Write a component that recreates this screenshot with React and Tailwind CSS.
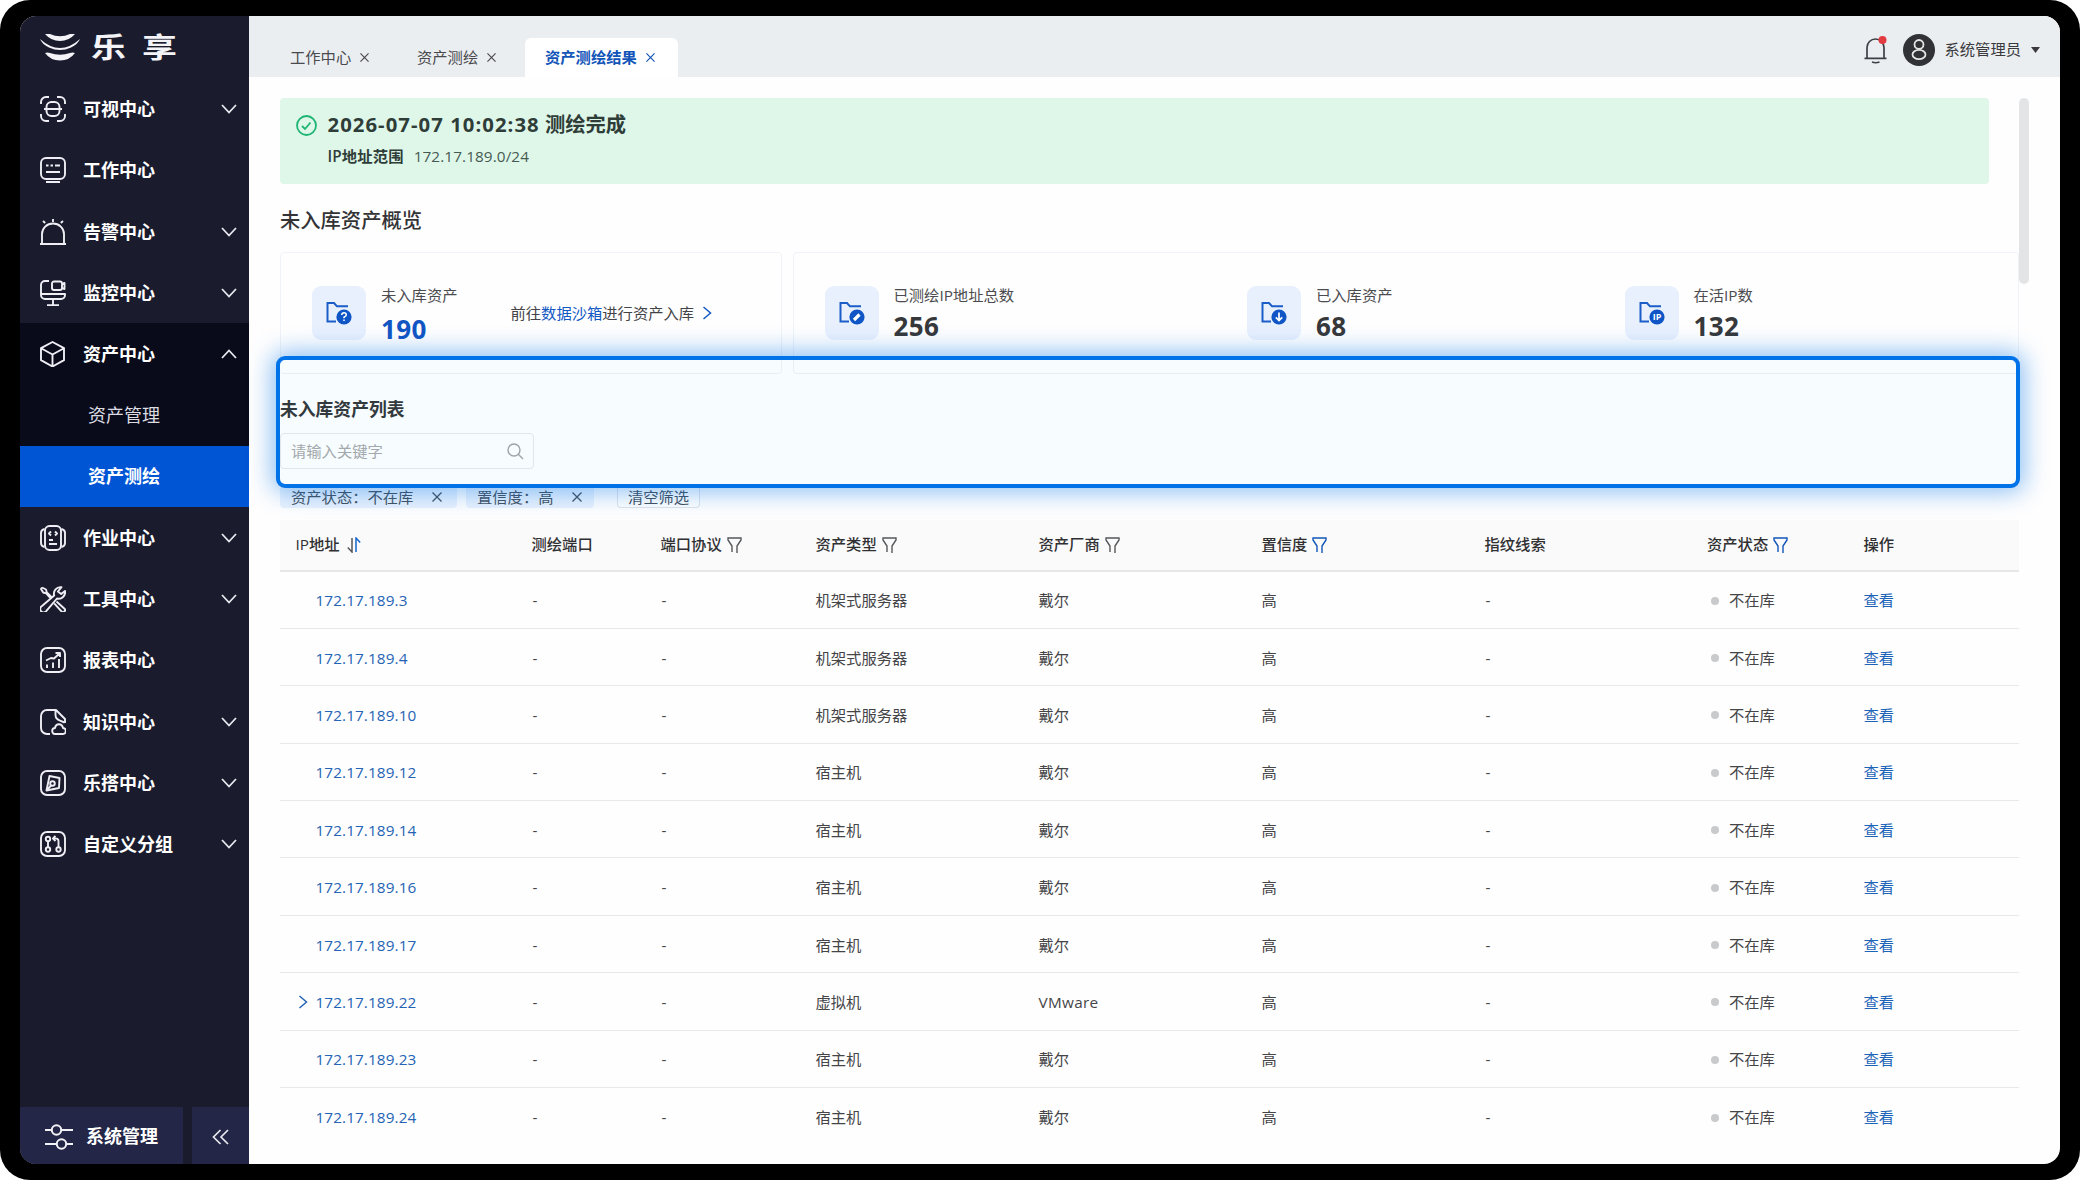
import { useState } from "react"
import clsx from "clsx"

const MENU = [
  { key: "view", label: "可视中心", arrow: true },
  { key: "work", label: "工作中心" },
  { key: "alarm", label: "告警中心", arrow: true },
  { key: "monitor", label: "监控中心", arrow: true },
  { key: "asset", label: "资产中心", arrow: true, children: ["资产管理", "资产测绘"] },
  { key: "job", label: "作业中心", arrow: true },
  { key: "tool", label: "工具中心", arrow: true },
  { key: "report", label: "报表中心" },
  { key: "know", label: "知识中心", arrow: true },
  { key: "build", label: "乐搭中心", arrow: true },
  { key: "group", label: "自定义分组", arrow: true },
]

const MENU_ICONS = {
  view: (
    <>
      <path d="M1 8V6a5 5 0 0 1 5-5h3M17 1h3a5 5 0 0 1 5 5v2M25 18v2a5 5 0 0 1-5 5h-3M9 25H6a5 5 0 0 1-5-5v-2" />
      <rect x="6.500" y="6" width="13" height="14" rx="5" />
      <path d="M4 13h18" />
    </>
  ),
  work: (
    <>
      <rect x="1" y="1" width="24" height="21" rx="5" />
      <path d="M6 8.500h2.500M10.500 8.500h2.500M15 8.500h5M6 15h14M6 25h14" />
    </>
  ),
  alarm: <path d="M2 24.500V15a10.700 10.200 0 0 1 22 0v9.500M0 25h26M13 0V3M3 2l2.200 2M23 2l-2.200 2" />,
  monitor: (
    <>
      <path d="M9 1H5a4 4 0 0 0-4 4v10a4 4 0 0 0 4 4h16a4 4 0 0 0 4-4v-1H1M13 19v6M7 25.200h12" />
      <rect x="12" y="1.500" width="10" height="8.500" rx="2" />
      <path d="M22 4l2.500-1v6L22 8" />
    </>
  ),
  asset: <path d="M12.500 1l11.500 6.200v12L12.500 25.500 1 19.200v-12zM1.500 7.500l11 6 11-6M12.500 13.500v12" />,
  job: (
    <>
      <rect x="5" y="1" width="16" height="24" rx="4.500" />
      <path d="M4.500 4C2 4.500 1 6 1 8v10c0 2 1 3.500 3.500 4M21.500 4C24 4.500 25 6 25 8v10c0 2-1 3.500-3.500 4M11 6.500L9 8.500l2 2M15 6.500l2 2-2 2M9 15h4M9 19h8" />
    </>
  ),
  tool: (
    <>
      <path d="M2 1.500l4 2 .8 3L12 11.500M2 1.500L1 3l2.200 3.500 3 .8L10 11.500M16.500 15.500l8 7.200a2 2 0 0 1-3 2.700l-7.300-8" />
      <path d="M21.500 1.200a6.500 6.500 0 0 0-7.300 8.300L2 20a3.400 3.400 0 1 0 4.600 4.600L17 12.500a6.500 6.500 0 0 0 8-7.500l-3.800 3-3.300-2.500z" />
      <path d="M4.300 22.300h.1" />
    </>
  ),
  report: (
    <>
      <rect x="1" y="1" width="24" height="24" rx="6" />
      <path d="M7 21v-3.500M13 21v-5.500M19 21v-9M6 13.500l5-2.500 3 .5 5.500-5M15.500 6H20v4" />
    </>
  ),
  know: (
    <>
      <path d="M10 25H7a6 6 0 0 1-6-6V7a6 6 0 0 1 6-6h9l9 9v4M15.500 1.500V6c0 3 1 4.500 9 7.500" />
      <path d="M15.500 25a3 3 0 0 1-.5-6c.8-5 7-5 8 0a3 3 0 0 1-.5 6z" />
    </>
  ),
  build: (
    <>
      <rect x="1" y="1" width="24" height="24" rx="6" />
      <path d="M9.500 6l10 2-.5 10-12.500 2.500z" />
      <circle cx="12.500" cy="13.500" r="2.300" />
      <path d="M11 15.500L7 20" />
    </>
  ),
  group: (
    <>
      <rect x="1" y="1" width="24" height="24" rx="6" />
      <circle cx="8" cy="8" r="2.200" />
      <circle cx="8" cy="18.500" r="2.200" />
      <circle cx="18.500" cy="18.500" r="2.200" />
      <path d="M8 10.500v5.500M18.500 16V10c0-2-1.500-3-4.500-2.500M15.500 5L13 7.500l2.500 2.500" />
    </>
  ),
}

const TABS = ["工作中心", "资产测绘", "资产测绘结果"]

const COLUMNS = [
  { label: "IP地址", sort: true },
  { label: "测绘端口" },
  { label: "端口协议", filter: true },
  { label: "资产类型", filter: true },
  { label: "资产厂商", filter: true },
  { label: "置信度", filter: true, on: true },
  { label: "指纹线索" },
  { label: "资产状态", filter: true, on: true },
  { label: "操作" },
]

const ROWS = [
  { ip: "172.17.189.3", type: "机架式服务器", vendor: "戴尔" },
  { ip: "172.17.189.4", type: "机架式服务器", vendor: "戴尔" },
  { ip: "172.17.189.10", type: "机架式服务器", vendor: "戴尔" },
  { ip: "172.17.189.12", type: "宿主机", vendor: "戴尔" },
  { ip: "172.17.189.14", type: "宿主机", vendor: "戴尔" },
  { ip: "172.17.189.16", type: "宿主机", vendor: "戴尔" },
  { ip: "172.17.189.17", type: "宿主机", vendor: "戴尔" },
  { ip: "172.17.189.22", type: "虚拟机", vendor: "VMware", expand: true },
  { ip: "172.17.189.23", type: "宿主机", vendor: "戴尔" },
  { ip: "172.17.189.24", type: "宿主机", vendor: "戴尔" },
]

const GRID = "grid grid-cols-[236px_129px_155px_223px_223px_223px_222.5px_156.5px_171px] items-center [&>*]:pl-[15.5px]"

function Chevron({ up }) {
  return (
    <svg width="16" height="10" viewBox="0 0 16 10" fill="none" stroke="#e8e8ee" strokeWidth="1.8" className={clsx(up && "rotate-180")}>
      <path d="M1 1l7 7.500L15 1" />
    </svg>
  )
}

function Close({ size = 9 }) {
  return (
    <svg width={size} height={size} viewBox="0 0 10 10" stroke="currentColor" strokeWidth="1.3">
      <path d="M.5.5l9 9M9.500.5l-9 9" />
    </svg>
  )
}

function Sidebar() {
  const [open] = useState("asset")
  return (
    <div className="w-[229px] shrink-0 flex flex-col bg-[#1a1c2e] text-white">
      <div className="h-[62px] shrink-0 flex items-center pl-5 pb-[1px]">
        <svg width="40" height="28" viewBox="0 0 40 28" fill="#f4f4f8">
          <path d="M5 1h5q10 4.500 20 0h5q-6 7-15 7T5 1z" />
          <path d="M0 6q20 18 40 0-2 5-9 8.500-11 5-22 0Q2 11 0 6z" />
          <path d="M5 20q2.500-1 5 0 10 3.500 20 0 2.500-1 5 0-5.500 7.500-15 7.500T5 20z" />
        </svg>
        <div className="ml-[11px] flex gap-[17px] text-[28px] font-bold leading-none text-[#f4f4f8]">
          <span className="w-[34px] origin-left scale-x-[1.25]">乐</span>
          <span className="w-[34px] origin-left scale-x-[1.25]">享</span>
        </div>
      </div>
      {MENU.map((m) => (
        <div key={m.key} className={clsx(m.key === open && "bg-[#090b1a]")}>
          <div className="h-[61.25px] pt-px flex items-center pl-5 pr-3">
            <svg width="26" height="26" viewBox="0 0 26 26" fill="none" stroke="#eeeef4" strokeWidth="1.9" strokeLinejoin="round" className="shrink-0">
              {MENU_ICONS[m.key]}
            </svg>
            <span className="ml-[17px] flex-1 text-[18px] font-bold leading-6">{m.label}</span>
            {m.arrow && <Chevron up={m.key === open} />}
          </div>
          {m.children?.map((c, i) => (
            <div key={c} className={clsx("h-[61.25px] pt-px flex items-center pl-[68px] text-[18px]", i === 1 ? "bg-[#0055d4] font-bold" : "text-[#dcdce2]")}>
              {c}
            </div>
          ))}
        </div>
      ))}
      <div className="mt-auto h-[57.5px] flex gap-[9px]">
        <div className="w-[163px] bg-[#25284a]/90 flex items-center pl-[25px] pt-[2px]">
          <svg width="28" height="26" viewBox="0 0 28 26" fill="none" stroke="#f2f2f6" strokeWidth="2" className="mt-0.5">
            <path d="M0 6h6M16 6h12M0 20h11M21 20h7" />
            <circle cx="11.500" cy="6" r="4.700" />
            <circle cx="16.500" cy="20" r="4.700" />
          </svg>
          <span className="ml-[13px] text-[18px] font-bold">系统管理</span>
        </div>
        <div className="flex-1 bg-[#25284a]/90 flex items-center justify-center pt-[3px]">
          <svg width="17" height="16" viewBox="0 0 17 16" fill="none" stroke="#e8e8ee" strokeWidth="1.7">
            <path d="M8.500 1L1.500 8l7 7M16 1L9 8l7 7" />
          </svg>
        </div>
      </div>
    </div>
  )
}

function TopBar() {
  return (
    <div className="h-[61px] shrink-0 bg-[#ebeef1] flex items-end">
      <div className="flex h-[39px] pl-[13px]">
        {TABS.map((t, i) => (
          <div key={t} className={clsx("h-full flex items-center gap-[9px] text-[15.3px]",
            i === 2 ? "w-[153px] pl-[20px] rounded-t-md bg-white text-[#1255b8] font-bold" : "text-[#4a4a4e]",
            i === 0 && "w-[127px] pl-7", i === 1 && "w-[136px] pl-7")}>
            <span className="-mt-px">{t}</span>
            <Close />
          </div>
        ))}
      </div>
      <div className="ml-auto h-[55px] flex items-center pr-[20px]">
        <svg width="24" height="28" viewBox="0 0 24 28" fill="none" stroke="#3c4046" strokeWidth="1.7" className="mt-px">
          <path d="M3 22V11.500a8.500 8.500 0 0 1 17 0V22M.5 22.300h22M8 26q3.500 1.500 7.500 0" />
          <circle cx="18.500" cy="4" r="4" fill="#e23b41" stroke="none" />
        </svg>
        <svg width="32" height="32" viewBox="0 0 32 32" className="ml-[15px]" fill="none" stroke="#e6e6e6" strokeWidth="1.8">
          <circle cx="16" cy="16" r="16" fill="#303236" stroke="none" />
          <circle cx="16" cy="10.500" r="4.500" />
          <ellipse cx="16" cy="20.500" rx="6.500" ry="4.700" />
        </svg>
        <span className="ml-[10px] text-[15.3px] text-[#3a3a3e]">系统管理员</span>
        <svg width="9" height="6" viewBox="0 0 9 6" className="ml-[10px]" fill="#3a3a3e"><path d="M0 0h9L4.500 6z" /></svg>
      </div>
    </div>
  )
}

function FolderIcon({ kind }) {
  return (
    <div className="size-[54px] shrink-0 rounded-[9px] bg-[#e8f0fd] flex items-center justify-center">
      <svg width="26" height="26" viewBox="0 0 26 26" fill="none" stroke="#1a5cc8" strokeWidth="2">
        <path d="M10 21.500H1.500V3H8l3 3.300h11" />
        <circle cx="18" cy="17" r="7.600" fill="#0f55c6" stroke="none" />
        {kind === "ask" && <path d="M15.700 15q.2-2.300 2.300-2.300t2.300 2q0 1.300-2.300 2.500v1M18 19.600V21" stroke="#fff" strokeWidth="1.500" />}
        {kind === "edit" && <path d="M15 20l5.500-5.500" stroke="#fff" strokeWidth="3.200" />}
        {kind === "down" && <path d="M18 12.500v7.500M14.800 17.300L18 20.500l3.200-3.200" stroke="#fff" strokeWidth="1.700" />}
        {kind === "ip" && <text x="18" y="20.300" textAnchor="middle" fontSize="9" fontWeight="bold" fill="#fff" stroke="none">IP</text>}
      </svg>
    </div>
  )
}

function Stat({ kind, label, value, className, blue }) {
  return (
    <div className={clsx("flex items-center gap-[15px] pb-px", className)}>
      <FolderIcon kind={kind} />
      <div className="mt-[2px]">
        <div className="text-[15.3px] leading-5 text-[#4c4c50]">{label}</div>
        <div className={clsx("text-[26px] font-bold leading-[34px] mt-[4px] tracking-[0.4px]", blue ? "text-[#1155c3] pt-[3px] -mb-[3px]" : "text-[#36383a]")}>{value}</div>
      </div>
    </div>
  )
}

function Filter({ on }) {
  return (
    <svg width="15" height="16" viewBox="0 0 15 16" fill="none" stroke={on ? "#1255b8" : "#55575a"} strokeWidth="1.400">
      <path d="M5 15V9L1 3V1h13v2l-4 6v7" />
    </svg>
  )
}

function AssetTable() {
  return (
    <div className="mt-3 text-[15.3px] text-[#454548]">
      <div className={clsx(GRID, "h-[51.500px] bg-[#fafafa] border-b-2 border-[#e6e8e8] font-medium text-[#303033]")}>
        {COLUMNS.map((c) => (
          <div key={c.label} className="flex items-center gap-[5px]">
            {c.label}
            {c.filter && <Filter on={c.on} />}
            {c.sort && (
              <svg width="14" height="16" viewBox="0 0 14 16" fill="none" strokeWidth="1.500" className="ml-[2px]">
                <path d="M5 1v14L.8 10.500" stroke="#55575a" />
                <path d="M9 15V1l4.200 4.500" stroke="#1665d0" />
              </svg>
            )}
          </div>
        ))}
      </div>
      {ROWS.map((r) => (
        <div key={r.ip} className={clsx(GRID, "h-[57.4px] pt-[2px] border-b border-[#e8eaea] last:border-b-0")}>
          <div className="flex items-center text-[#2563b4] tracking-[0.1px]">
            <span className="w-5 pl-[2px]">
              {r.expand && (
                <svg width="10" height="14" viewBox="0 0 10 14" fill="none" stroke="currentColor" strokeWidth="1.500"><path d="M1.500 1l7 6-7 6" /></svg>
              )}
            </span>
            {r.ip}
          </div>
          <div className="indent-px">-</div>
          <div className="indent-px">-</div>
          <div>{r.type}</div>
          <div className={clsx(r.expand && "tracking-[0.3px]")}>{r.vendor}</div>
          <div>高</div>
          <div className="indent-px">-</div>
          <div className="flex items-center">
            <span className="ml-1 mr-[10px] size-2 rounded-full bg-[#c9cacb]" />
            不在库
          </div>
          <div className="text-[#1d64b8]">查看</div>
        </div>
      ))}
    </div>
  )
}

export default function App() {
  return (
    <div className="w-[2080px] h-[1180px] bg-black rounded-[30px] px-5 py-4 font-['Open_Sans','Noto_Sans_CJK_SC',sans-serif]">
      <div className="h-full flex rounded-[16px] overflow-hidden bg-[#fefefe]">
        <Sidebar />
        <div className="flex-1 flex flex-col min-w-0">
          <TopBar />
          <div className="relative flex-1 flex pl-[31px] pt-[21px] min-h-0">
            <div className="w-[1739px] shrink-0">
              <div className="w-[1708.5px] h-[86px] rounded bg-[#dff7e9] flex pl-4 pt-[11px]">
                <svg width="21" height="21" viewBox="0 0 21 21" fill="none" stroke="#1db573" strokeWidth="1.800" className="mt-[6px]">
                  <circle cx="10.500" cy="10.500" r="9.500" />
                  <path d="M6 11l3 3 5.500-6.500" />
                </svg>
                <div className="ml-[10.5px] text-[#2f3d38]">
                  <div className="text-[20.3px] leading-[30px] font-semibold">
                    <span className="font-bold tracking-[1.05px]">2026-07-07 10:02:38</span> 测绘完成
                  </div>
                  <div className="mt-[6px] text-[15.3px] leading-[22px] flex gap-[10px]">
                    <span className="font-semibold tracking-[0.15px]">IP地址范围</span>
                    <span className="text-[#465a53] tracking-[0.1px]">172.17.189.0/24</span>
                  </div>
                </div>
              </div>

              <div className="mt-[21px] h-[31px] text-[20.3px] leading-[30px] font-medium text-[#333336]">未入库资产概览</div>
              <div className="mt-4 flex gap-[11px] h-[122px]">
                <div className="w-[502px] border border-[#eff3f7] rounded flex items-center pl-[31px]">
                  <Stat kind="ask" label="未入库资产" value="190" blue />
                  <div className="ml-[53px] flex items-center gap-2 text-[15.3px] text-[#444448]">
                    <span>前往<span className="text-[#1259c4]">数据沙箱</span>进行资产入库</span>
                    <svg width="10" height="14" viewBox="0 0 10 14" fill="none" stroke="#1259c4" strokeWidth="1.500"><path d="M1.500 1l7 6-7 6" /></svg>
                  </div>
                </div>
                <div className="flex-1 border border-[#eff3f7] rounded flex items-center pl-[30.500px]">
                  <Stat kind="edit" label="已测绘IP地址总数" value="256" className="w-[422.5px]" />
                  <Stat kind="down" label="已入库资产" value="68" className="w-[377.5px]" />
                  <Stat kind="ip" label="在活IP数" value="132" />
                </div>
              </div>

              {/* highlighted area: card bottoms, list title and keyword search */}
              <div className="relative z-10 -mt-[18px] -ml-1 w-[1744px] h-[132px] rounded-[9px] border-4 border-[#0073e8] shadow-[0_0_24px_4px_rgba(0,115,232,0.45)] bg-[#f7fcff]">
                <div className="flex gap-[11px] h-[14px]">
                  <div className="w-[502px] rounded-b border-b border-r border-[#e9f0f4]" />
                  <div className="flex-1 rounded-bl border-b border-l border-[#e9f0f4]" />
                </div>
                <div className="mt-[23px] h-[24px] text-[17.8px] leading-6 font-semibold text-[#333a3e]">未入库资产列表</div>
                <div className="mt-[12px] w-[254px] h-[36px] border border-[#e0e6ec] rounded flex items-center justify-between pl-[10px] pr-[9px] text-[15.3px] text-[#a2a8ab]">
                  请输入关键字
                  <svg width="17" height="17" viewBox="0 0 17 17" fill="none" stroke="#9da4a8" strokeWidth="1.400">
                    <circle cx="7" cy="7" r="6" />
                    <path d="M11.300 11.300L16 16" />
                  </svg>
                </div>
              </div>

              <div className="flex h-5 text-[15.3px] leading-[18px] text-[#44505c]">
                <div className="w-[177px] bg-[#e9f2fd] rounded-b flex justify-between pl-[11px] pr-[15px]">
                  <span>资产状态：不在库</span>
                  <span className="pt-1"><Close size={10} /></span>
                </div>
                <div className="ml-[9px] w-[128px] bg-[#e9f2fd] rounded-b flex justify-between pl-[11px] pr-[12px]">
                  <span>置信度：高</span>
                  <span className="pt-1"><Close size={10} /></span>
                </div>
                <div className="ml-[23px] w-[83px] bg-white border border-t-0 border-[#e0e4ea] rounded-b text-center">清空筛选</div>
              </div>

              <AssetTable />
            </div>
            <div className="w-[10px] h-[186px] rounded-full bg-[#e2e4e5]" />
          </div>
        </div>
      </div>
    </div>
  )
}
